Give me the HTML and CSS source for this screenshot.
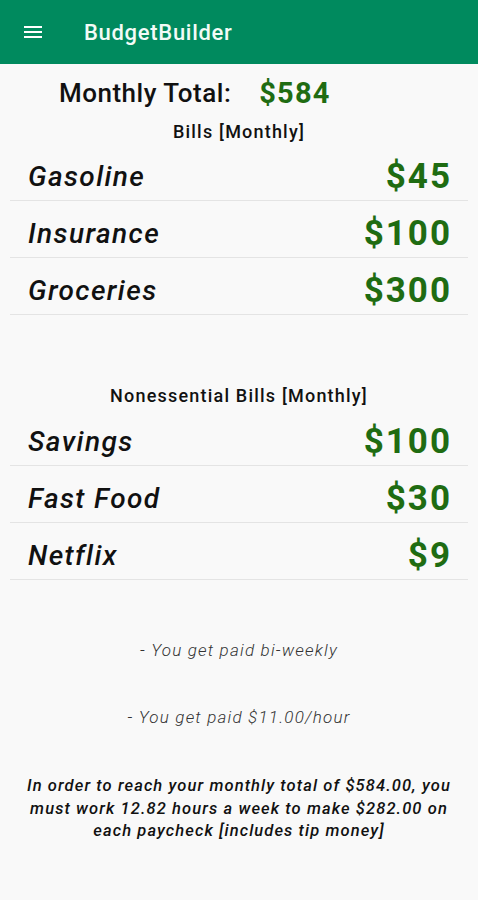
FILE: index.html
```html
<!DOCTYPE html>
<html lang="en">
<head>
    <meta charset="UTF-8">
    <meta name="viewport" content="width=device-width, initial-scale=1.0">
    <title>BudgetBuilder</title>
    <link rel="stylesheet" href="styles.css">
</head>
<body>
    <header class="app-bar">
        <svg class="menu-icon" width="24" height="24" viewBox="0 0 24 24">
            <path d="M3 6h18v2H3zM3 11h18v2H3zM3 16h18v2H3z" fill="#fff"/>
        </svg>
        <span class="app-title">BudgetBuilder</span>
    </header>

    <main class="content">
        <div class="total-line">
            <span class="total-label">Monthly Total:</span>
            <span class="total-value">$584</span>
        </div>

        <h2 class="section-title">Bills [Monthly]</h2>
        <div class="bill-list">
            <div class="bill-row"><span class="bill-name">Gasoline</span><span class="bill-amount">$45</span></div>
            <div class="bill-row"><span class="bill-name">Insurance</span><span class="bill-amount">$100</span></div>
            <div class="bill-row"><span class="bill-name">Groceries</span><span class="bill-amount">$300</span></div>
        </div>

        <h2 class="section-title second">Nonessential Bills [Monthly]</h2>
        <div class="bill-list">
            <div class="bill-row"><span class="bill-name">Savings</span><span class="bill-amount">$100</span></div>
            <div class="bill-row"><span class="bill-name">Fast Food</span><span class="bill-amount">$30</span></div>
            <div class="bill-row"><span class="bill-name">Netflix</span><span class="bill-amount">$9</span></div>
        </div>

        <p class="pay-note first">- You get paid bi-weekly</p>
        <p class="pay-note">- You get paid $11.00/hour</p>

        <p class="summary">In order to reach your monthly total of $584.00, you must work 12.82 hours a week to make $282.00 on each paycheck [includes tip money]</p>
    </main>
</body>
</html>
```

FILE: styles.css
```css
body {
    margin: 0;
    background-color: #f9f9f9;
    font-family: Roboto, "Liberation Sans", sans-serif;
    color: #111;
}

.app-bar {
    height: 64px;
    background-color: #008a5e;
    display: flex;
    align-items: center;
    padding-left: 21px;
    box-sizing: border-box;
}

.menu-icon {
    display: block;
}

.app-title {
    margin-left: 39px;
    color: #f2fbf6;
    font-size: 22px;
    font-weight: 500;
    letter-spacing: 0.7px;
}

.total-line {
    display: flex;
    align-items: center;
    padding: 14px 0 0 59px;
    height: 30px;
}

.total-label {
    font-size: 26px;
    font-weight: 500;
    line-height: 30px;
    letter-spacing: 0.5px;
}

.total-value {
    margin-left: 28px;
    font-size: 29px;
    font-weight: 700;
    color: #1f6c12;
    line-height: 30px;
    letter-spacing: 1.2px;
}

.section-title {
    margin: 14px 0 2px;
    font-size: 18px;
    font-weight: 500;
    line-height: 20px;
    letter-spacing: 1.2px;
    text-align: center;
}

.section-title.second {
    margin-top: 71px;
    margin-bottom: 3px;
}

.bill-list {
    margin: 0 10px;
}

.bill-row {
    display: flex;
    justify-content: space-between;
    align-items: center;
    height: 40px;
    padding: 12px 16px 4px 18px;
    border-bottom: 1px solid #e4e4e4;
}

.bill-name {
    font-size: 28px;
    font-style: italic;
    font-weight: 500;
    letter-spacing: 1.4px;
}

.bill-amount {
    font-size: 35px;
    font-weight: 700;
    color: #1f6c12;
    letter-spacing: 2px;
}

.pay-note {
    margin: 45px 0 0;
    font-size: 17px;
    font-style: italic;
    font-weight: 300;
    line-height: 22px;
    letter-spacing: 1.2px;
    color: #333;
    text-align: center;
}

.pay-note.first {
    margin-top: 59px;
}

.summary {
    margin: 47px 0 0;
    padding: 0 16px;
    font-size: 16.5px;
    font-style: italic;
    font-weight: 500;
    line-height: 22.5px;
    letter-spacing: 1.1px;
    text-align: center;
}
```
